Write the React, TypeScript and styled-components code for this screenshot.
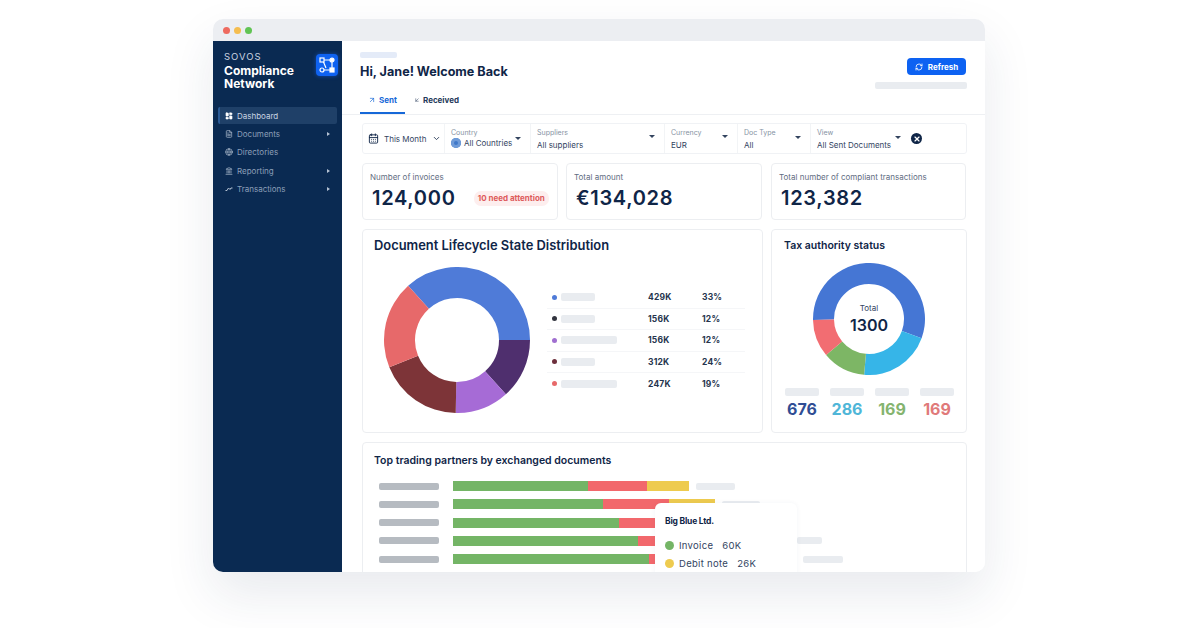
import React from 'react';
import styled, { createGlobalStyle } from 'styled-components';
import {
  ArrowDownLeft,
  ArrowUpRight,
  CalendarDays,
  ChevronDown,
  FileText,
  Globe,
  Landmark,
  LayoutDashboard,
  RefreshCw,
  X,
} from 'lucide-react';

const GlobalStyle = createGlobalStyle`
  html, body {
    margin: 0;
    width: 1200px;
    height: 628px;
    overflow: hidden;
    background: #fff;
    font-family: Inter, "Liberation Sans", sans-serif;
    color: #0f2547;
  }
  * { box-sizing: border-box; }
`;

const Page = styled.div`
  padding: 19px 215px 0 213px;
`;

const Frame = styled.div`
  height: 553px;
  border-radius: 10px;
  overflow: hidden;
  display: flex;
  flex-direction: column;
  box-shadow: 0 22px 50px rgba(30, 50, 90, 0.1);
`;

const TitleBar = styled.div`
  height: 22px;
  flex: none;
  background: #eceef2;
  display: flex;
  align-items: center;
  gap: 4px;
  padding-left: 10px;
`;

const Light = styled.span<{ $color: string }>`
  width: 7px;
  height: 7px;
  border-radius: 50%;
  background: ${p => p.$color};
`;

const Body = styled.div`
  flex: 1;
  min-height: 0;
  display: flex;
`;

const Sidebar = styled.aside`
  width: 129px;
  flex: none;
  background: #0a2a52;
  padding: 10px 5px 0;
`;

const Brand = styled.div`
  display: flex;
  justify-content: space-between;
  padding: 0 0 0 6px;
  margin: 0 -1px 17px 0;
`;

const BrandText = styled.div`
  color: #fff;
  font-size: 12px;
  font-weight: 700;
  line-height: 13px;
`;

const Sovos = styled.div`
  font-size: 9.5px;
  font-weight: 400;
  letter-spacing: 1px;
  line-height: 12px;
  margin-bottom: 1px;
  color: #c9d3e0;
`;

const LogoTile = styled.div`
  width: 22px;
  height: 22px;
  margin-top: 3px;
  border-radius: 4px;
  background: #0f62f0;
  box-shadow: 0 0 4px rgba(30, 110, 255, 0.5);
  display: flex;
  align-items: center;
  justify-content: center;
`;

const NavItem = styled.div<{ $active?: boolean }>`
  height: 17px;
  margin-bottom: 1.4px;
  padding: 0 7px 0 ${p => (p.$active ? 5 : 7)}px;
  display: flex;
  align-items: center;
  gap: 4px;
  border-radius: 2px;
  font-size: 8px;
  color: ${p => (p.$active ? '#c9d4e2' : '#8c9fb8')};
  background: ${p => (p.$active ? '#1f4068' : 'transparent')};
  border-left: ${p => (p.$active ? '2px solid #2a5a96' : '0')};

  svg { flex: none; }
`;

const NavCaret = styled.span`
  margin-left: auto;
  border-left: 3px solid #b5c2d3;
  border-top: 2.5px solid transparent;
  border-bottom: 2.5px solid transparent;
`;

const Main = styled.main`
  flex: 1;
  min-width: 0;
  background: #fff;
  overflow: hidden;
`;

const Header = styled.header`
  height: 74px;
  padding: 11px 18px 0;
  border-bottom: 1px solid #eef0f3;
  display: flex;
  justify-content: space-between;
`;

const Skeleton = styled.div<{ $w: number; $h?: number; $color?: string }>`
  width: ${p => p.$w}px;
  height: ${p => p.$h ?? 7}px;
  flex: none;
  border-radius: 2px;
  background: ${p => p.$color ?? '#e9ecf0'};
`;

const Heading = styled.h1`
  margin: 6px 0 14px;
  font-size: 12.6px;
  line-height: 16px;
  font-weight: 700;
  color: #0f2547;
`;

const Tabs = styled.div`
  display: flex;
  align-items: flex-start;
`;

const Tab = styled.div<{ $active?: boolean }>`
  width: 45px;
  height: 20px;
  margin-right: 9px;
  display: flex;
  align-items: center;
  justify-content: center;
  gap: 3px;
  padding-bottom: 6px;
  font-size: 8px;
  font-weight: 700;
  white-space: nowrap;
  color: ${p => (p.$active ? '#1668d8' : '#25395a')};
  border-bottom: 2px solid ${p => (p.$active ? '#1668d8' : 'transparent')};
`;

const HeaderRight = styled.div`
  display: flex;
  flex-direction: column;
  align-items: flex-end;
  gap: 7px;
  padding-top: 6px;
`;

const RefreshButton = styled.button`
  width: 59px;
  height: 17px;
  padding: 0;
  border: 0;
  border-radius: 4px;
  margin-right: 1px;
  background: #0d62f2;
  color: #fff;
  font: 700 8px Inter, sans-serif;
  display: flex;
  align-items: center;
  justify-content: center;
  gap: 5px;
`;

const Content = styled.div`
  padding: 8px 18px 0 20px;
  display: flex;
  flex-direction: column;
  gap: 9px;
`;

const FilterBar = styled.div`
  height: 31px;
  display: flex;
  align-items: stretch;
  border: 1px solid #f0f2f5;
  border-radius: 3px;
`;

const DateFilter = styled.div`
  width: 81px;
  padding-left: 5px;
  display: flex;
  align-items: center;
  gap: 5px;
  font-size: 8px;
  color: #33445f;
`;

const Chevron = styled(ChevronDown)`
  margin-left: auto;
  margin-right: 3px;
`;

const Filter = styled.div<{ $w: number }>`
  width: ${p => p.$w}px;
  padding: 4px 0 0 6px;
  position: relative;
  border-left: 1px solid #f2f4f6;
  font-size: 8px;
  color: #33445f;
`;

const FilterLabel = styled.div<{ $gap: number }>`
  font-size: 7px;
  line-height: 9px;
  color: #8692a3;
  margin-bottom: ${p => p.$gap}px;
`;

const FilterValue = styled.div`
  display: flex;
  align-items: center;
  gap: 3px;
  line-height: 10px;
  white-space: nowrap;
`;

const Caret = styled.span<{ $top: number }>`
  position: absolute;
  right: 9px;
  top: ${p => p.$top}px;
  border-top: 3px solid #33445f;
  border-left: 3px solid transparent;
  border-right: 3px solid transparent;
`;

const CountryDot = styled.span`
  width: 10px;
  height: 10px;
  border-radius: 50%;
  background: #3f78c9;
  box-shadow: inset 0 0 0 3px #6f9bd8;
`;

const ClearButton = styled.div`
  width: 11px;
  height: 11px;
  margin: 9px 0 0 1px;
  border-radius: 50%;
  background: #0f2547;
  color: #fff;
  display: flex;
  align-items: center;
  justify-content: center;
`;

const StatsRow = styled.div`
  display: grid;
  grid-template-columns: repeat(3, 196px);
  gap: 8px;
`;

const Card = styled.section`
  background: #fff;
  border: 1px solid #eceef1;
  border-radius: 4px;
`;

const StatCard = styled(Card)`
  height: 57px;
  padding: 8px 8px 0 7px;

  &:last-child { margin-left: 1px; }
`;

const StatLabel = styled.div`
  font-size: 8px;
  line-height: 10px;
  color: #5f6d82;
`;

const StatValueRow = styled.div`
  display: flex;
  align-items: center;
  margin-top: 4px;
  padding-left: 2px;
`;

const StatValue = styled.div`
  font-size: 20px;
  line-height: 24px;
  font-weight: 600;
  letter-spacing: 0.7px;
  color: #0f2547;
`;

const Badge = styled.span`
  width: 78px;
  height: 15px;
  margin-left: 18px;
  display: flex;
  align-items: center;
  justify-content: center;
  border-radius: 7px;
  background: #fdeeee;
  color: #de5b5b;
  font-size: 8px;
  font-weight: 700;
`;

const ChartsRow = styled.div`
  display: grid;
  grid-template-columns: 401px 196px;
  gap: 8px;
`;

const ChartCard = styled(Card)<{ $pad: number }>`
  height: 204px;
  padding: 8px ${p => p.$pad}px 0;
`;

const ChartTitle = styled.h2<{ $size: number }>`
  margin: 0;
  font-size: ${p => p.$size}px;
  line-height: 16px;
  font-weight: 600;
  color: #0f2547;
`;

const DistributionBody = styled.div`
  display: flex;
  align-items: flex-start;
  margin: 13px 0 0 10px;
`;

const Legend = styled.div`
  width: 198px;
  margin: 20px 0 0 17px;
`;

const LegendRow = styled.div`
  height: 21.5px;
  padding-left: 5px;
  display: flex;
  align-items: center;
  border-bottom: 1px solid #f5f6f8;
  font-size: 8.5px;
  font-weight: 700;
  letter-spacing: 0.2px;
  color: #25344d;

  &:last-child { border-bottom: 0; }
`;

const LegendDot = styled.span<{ $color: string }>`
  width: 5px;
  height: 5px;
  margin-right: 4px;
  border-radius: 50%;
  background: ${p => p.$color};
`;

const LegendName = styled.div`
  width: 87px;
`;

const LegendCount = styled.span`
  width: 54px;
`;

const TaxDonut = styled.div`
  position: relative;
  width: 112px;
  height: 112px;
  margin: 9px auto 0;

  svg { display: block; }
`;

const DonutCenter = styled.div`
  position: absolute;
  inset: 0;
  display: flex;
  flex-direction: column;
  align-items: center;
  justify-content: center;
  font-size: 8px;
  color: #33445f;
`;

const DonutTotal = styled.div`
  font-size: 16px;
  line-height: 20px;
  font-weight: 600;
  color: #0f2547;
  margin-top: 2px;
`;

const TaxStats = styled.div`
  display: grid;
  grid-template-columns: repeat(4, 34px);
  justify-content: space-between;
  margin: 13px 0 0 1px;
`;

const TaxStat = styled.div<{ $color: string }>`
  display: flex;
  flex-direction: column;
  align-items: center;
  gap: 3px;
  font-size: 16px;
  line-height: 20px;
  font-weight: 700;
  color: ${p => p.$color};
`;

const PartnersCard = styled(Card)`
  position: relative;
  height: 140px;
  padding: 10px 11px 0;
`;

const BarRows = styled.div`
  margin-top: 12px;
  display: flex;
  flex-direction: column;
  gap: 8.3px;
`;

const BarRow = styled.div`
  height: 10px;
  display: flex;
  align-items: center;
  padding-left: 5px;
`;

const BarLabel = styled(Skeleton)`
  margin-right: 14px;
`;

const BarSegment = styled.div<{ $color: string }>`
  height: 10px;
  flex: none;
  background: ${p => p.$color};
`;

const BarTrail = styled(Skeleton)`
  margin-left: 7px;
`;

const Tooltip = styled.div`
  position: absolute;
  left: 292px;
  top: 60px;
  width: 142px;
  height: 90px;
  padding: 13px 10px;
  border-radius: 6px 6px 0 0;
  background: #fff;
  box-shadow: 0 0 5px rgba(30, 50, 90, 0.05);
`;

const TooltipTitle = styled.div`
  font-size: 8.5px;
  line-height: 10px;
  font-weight: 700;
  letter-spacing: -0.2px;
  color: #0f2547;
  margin-bottom: 10px;
`;

const TooltipRow = styled.div`
  height: 18px;
  display: flex;
  align-items: center;
  font-size: 9.5px;
  letter-spacing: 0.3px;
  color: #33445f;
`;

const TooltipDot = styled.span<{ $color: string }>`
  width: 9px;
  height: 9px;
  margin-right: 5px;
  border-radius: 50%;
  background: ${p => p.$color};
`;

const TooltipAmount = styled.span`
  margin-left: 9px;
`;

// clockwise angles in degrees, 0 = 12 o'clock
const polar = (r: number, deg: number, c: number) => {
  const a = (deg * Math.PI) / 180;
  return `${(c + r * Math.sin(a)).toFixed(2)} ${(c - r * Math.cos(a)).toFixed(2)}`;
};

const ringPath = (from: number, to: number, outer: number, inner: number, c: number) => {
  const large = to - from > 180 ? 1 : 0;
  return `M${polar(outer, from, c)}A${outer} ${outer} 0 ${large} 1 ${polar(outer, to, c)}L${polar(inner, to, c)}A${inner} ${inner} 0 ${large} 0 ${polar(inner, from, c)}Z`;
};

interface ISlice {
  from: number;
  to: number;
  color: string;
}

const Donut = ({ slices, outer, inner }: { slices: ISlice[]; outer: number; inner: number }) => (
  <svg width={outer * 2} height={outer * 2} style={{ flex: 'none' }}>
    {slices.map(s => (
      <path key={s.from} d={ringPath(s.from, s.to, outer, inner, outer)} fill={s.color} />
    ))}
  </svg>
);

const lifecycleSlices: ISlice[] = [
  { from: -42, to: 90, color: '#4f7bd8' },
  { from: 90, to: 138, color: '#4f2f6e' },
  { from: 138, to: 181, color: '#a66bd6' },
  { from: 181, to: 248, color: '#7d3438' },
  { from: 248, to: 318, color: '#e7696a' },
];

const taxSlices: ISlice[] = [
  { from: -91, to: 110, color: '#4576d4' },
  { from: 110, to: 185, color: '#36b5e8' },
  { from: 185, to: 230, color: '#7db665' },
  { from: 230, to: 269, color: '#f26d72' },
];

const legendRows = [
  { color: '#4f7bd8', width: 34, count: '429K', pct: '33%' },
  { color: '#33353f', width: 34, count: '156K', pct: '12%' },
  { color: '#a06fd0', width: 56, count: '156K', pct: '12%' },
  { color: '#6d2f3c', width: 34, count: '312K', pct: '24%' },
  { color: '#e7696a', width: 56, count: '247K', pct: '19%' },
];

const barRows = [
  { green: 135, red: 59, yellow: 42, trail: 39 },
  { green: 150, red: 66, yellow: 46, trail: 38 },
  { green: 166, red: 171, yellow: 0, trail: 0 },
  { green: 185, red: 152, yellow: 0, trail: 25 },
  { green: 196, red: 147, yellow: 0, trail: 40 },
];

const taxStats = [
  { color: '#2f4d94', value: '676' },
  { color: '#4fb6d8', value: '286' },
  { color: '#85b46f', value: '169' },
  { color: '#e07a7a', value: '169' },
];

const TransactionsIcon = ({ size, color }: { size: number; color: string }) => (
  <svg width={size} height={size} viewBox="0 0 16 16" fill="none" stroke={color} strokeWidth="2">
    <path d="M1 11h3l3-5 3 3 2-3h3" />
  </svg>
);

const navItems = [
  { label: 'Documents', Icon: FileText, caret: true },
  { label: 'Directories', Icon: Globe, caret: false },
  { label: 'Reporting', Icon: Landmark, caret: true },
  { label: 'Transactions', Icon: TransactionsIcon, caret: true },
];

const filters = [
  { label: 'Suppliers', value: 'All suppliers', width: 134, top: 11 },
  { label: 'Currency', value: 'EUR', width: 73, top: 11 },
  { label: 'Doc Type', value: 'All', width: 73, top: 12 },
  { label: 'View', value: 'All Sent Documents', width: 100, top: 12 },
];

const NetworkLogo = () => (
  <svg width="16" height="16" viewBox="0 0 16 16" fill="none" stroke="#fff" strokeWidth="1.2">
    <rect x="1" y="1" width="4" height="4" />
    <circle cx="13" cy="3" r="2" fill="#fff" />
    <circle cx="3" cy="13" r="2" />
    <rect x="11" y="11" width="4" height="4" fill="#fff" />
    <path d="M5 3h6M13 5v6M5 13h6M4.5 5l2.5 6" />
  </svg>
);

export default function App() {
  return (
    <>
      <GlobalStyle />
      <Page>
        <Frame>
          <TitleBar>
            <Light $color="#ee6a5f" />
            <Light $color="#f5bd4f" />
            <Light $color="#61c454" />
          </TitleBar>
          <Body>
            <Sidebar>
              <Brand>
                <BrandText>
                  <Sovos>SOVOS</Sovos>
                  Compliance
                  <br />
                  Network
                </BrandText>
                <LogoTile>
                  <NetworkLogo />
                </LogoTile>
              </Brand>
              <NavItem $active>
                <LayoutDashboard size={8} color="#fff" fill="#fff" />
                Dashboard
              </NavItem>
              {navItems.map(({ label, Icon, caret }) => (
                <NavItem key={label}>
                  <Icon size={8} color="#b5c2d3" />
                  {label}
                  {caret && <NavCaret />}
                </NavItem>
              ))}
            </Sidebar>
            <Main>
              <Header>
                <div>
                  <Skeleton $w={37} $h={6} $color="#e4ebf8" />
                  <Heading>Hi, Jane! Welcome Back</Heading>
                  <Tabs>
                    <Tab $active>
                      <ArrowUpRight size={8} />
                      Sent
                    </Tab>
                    <Tab>
                      <ArrowDownLeft size={8} />
                      Received
                    </Tab>
                  </Tabs>
                </div>
                <HeaderRight>
                  <RefreshButton>
                    <RefreshCw size={8} strokeWidth={2.5} />
                    Refresh
                  </RefreshButton>
                  <Skeleton $w={92} $h={7} />
                </HeaderRight>
              </Header>
              <Content>
                <FilterBar>
                  <DateFilter>
                    <CalendarDays size={11} color="#0f2547" />
                    This Month
                    <Chevron size={9} strokeWidth={2.5} />
                  </DateFilter>
                  <Filter $w={86}>
                    <FilterLabel $gap={1}>Country</FilterLabel>
                    <FilterValue>
                      <CountryDot />
                      All Countries
                    </FilterValue>
                    <Caret $top={13} />
                  </Filter>
                  {filters.map(f => (
                    <Filter key={f.label} $w={f.width}>
                      <FilterLabel $gap={3}>{f.label}</FilterLabel>
                      <FilterValue>{f.value}</FilterValue>
                      <Caret $top={f.top} />
                    </Filter>
                  ))}
                  <ClearButton>
                    <X size={8} strokeWidth={3.5} />
                  </ClearButton>
                </FilterBar>
                <StatsRow>
                  <StatCard>
                    <StatLabel>Number of invoices</StatLabel>
                    <StatValueRow>
                      <StatValue>124,000</StatValue>
                      <Badge>10 need attention</Badge>
                    </StatValueRow>
                  </StatCard>
                  <StatCard>
                    <StatLabel>Total amount</StatLabel>
                    <StatValueRow>
                      <StatValue>€134,028</StatValue>
                    </StatValueRow>
                  </StatCard>
                  <StatCard>
                    <StatLabel>Total number of compliant transactions</StatLabel>
                    <StatValueRow>
                      <StatValue>123,382</StatValue>
                    </StatValueRow>
                  </StatCard>
                </StatsRow>
                <ChartsRow>
                  <ChartCard $pad={11}>
                    <ChartTitle $size={12.9}>Document Lifecycle State Distribution</ChartTitle>
                    <DistributionBody>
                      <Donut slices={lifecycleSlices} outer={73} inner={42} />
                      <Legend>
                        {legendRows.map(r => (
                          <LegendRow key={r.color}>
                            <LegendDot $color={r.color} />
                            <LegendName>
                              <Skeleton $w={r.width} $h={8} />
                            </LegendName>
                            <LegendCount>{r.count}</LegendCount>
                            <span>{r.pct}</span>
                          </LegendRow>
                        ))}
                      </Legend>
                    </DistributionBody>
                  </ChartCard>
                  <ChartCard $pad={12}>
                    <ChartTitle $size={10.5}>Tax authority status</ChartTitle>
                    <TaxDonut>
                      <Donut slices={taxSlices} outer={56} inner={35} />
                      <DonutCenter>
                        Total
                        <DonutTotal>1300</DonutTotal>
                      </DonutCenter>
                    </TaxDonut>
                    <TaxStats>
                      {taxStats.map(s => (
                        <TaxStat key={s.color} $color={s.color}>
                          <Skeleton $w={34} $h={8} />
                          {s.value}
                        </TaxStat>
                      ))}
                    </TaxStats>
                  </ChartCard>
                </ChartsRow>
                <PartnersCard>
                  <ChartTitle $size={10.5}>Top trading partners by exchanged documents</ChartTitle>
                  <BarRows>
                    {barRows.map(r => (
                      <BarRow key={r.green}>
                        <BarLabel $w={60} $h={7} $color="#b6bbc1" />
                        <BarSegment $color="#74b566" style={{ width: r.green }} />
                        <BarSegment $color="#f2686c" style={{ width: r.red }} />
                        {r.yellow > 0 && <BarSegment $color="#eecb4f" style={{ width: r.yellow }} />}
                        {r.trail > 0 && <BarTrail $w={r.trail} $h={7} />}
                      </BarRow>
                    ))}
                  </BarRows>
                  <Tooltip>
                    <TooltipTitle>Big Blue Ltd.</TooltipTitle>
                    <TooltipRow>
                      <TooltipDot $color="#74b566" />
                      Invoice
                      <TooltipAmount>60K</TooltipAmount>
                    </TooltipRow>
                    <TooltipRow>
                      <TooltipDot $color="#eecb4f" />
                      Debit note
                      <TooltipAmount>26K</TooltipAmount>
                    </TooltipRow>
                  </Tooltip>
                </PartnersCard>
              </Content>
            </Main>
          </Body>
        </Frame>
      </Page>
    </>
  );
}
